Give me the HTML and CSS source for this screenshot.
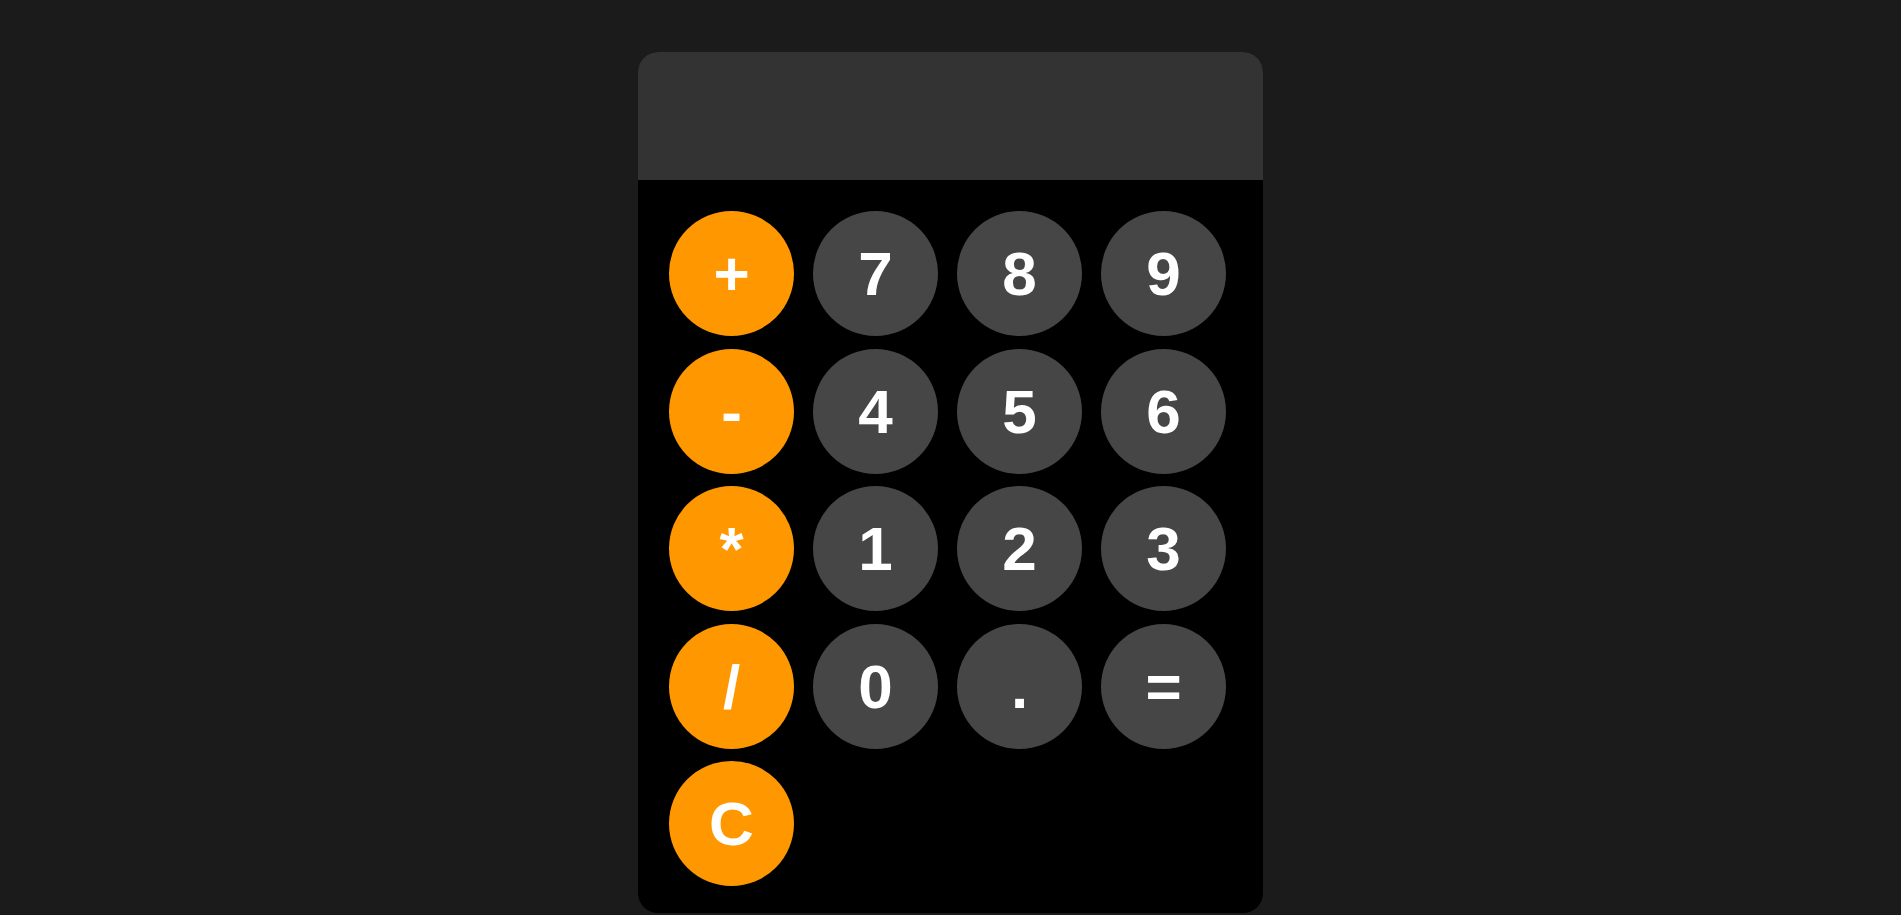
FILE: index.html
```html
<!DOCTYPE html>
<html lang="en">
<head>
    <meta charset="UTF-8">
    <meta name="viewport" content="width=device-width, initial-scale=1.0">
    <title>Calculator</title>
    <link rel="stylesheet" href="styles.css">
</head>
<body>
    <div class="calculator">
        <div class="display" id="display"></div>
        <div class="keys">
            <button class="key operator" onclick="press('+')">+</button>
            <button class="key" onclick="press('7')">7</button>
            <button class="key" onclick="press('8')">8</button>
            <button class="key" onclick="press('9')">9</button>

            <button class="key operator" onclick="press('-')">-</button>
            <button class="key" onclick="press('4')">4</button>
            <button class="key" onclick="press('5')">5</button>
            <button class="key" onclick="press('6')">6</button>

            <button class="key operator" onclick="press('*')">*</button>
            <button class="key" onclick="press('1')">1</button>
            <button class="key" onclick="press('2')">2</button>
            <button class="key" onclick="press('3')">3</button>

            <button class="key operator" onclick="press('/')">/</button>
            <button class="key" onclick="press('0')">0</button>
            <button class="key" onclick="press('.')">.</button>
            <button class="key" onclick="calculate()">=</button>

            <button class="key operator" onclick="clearDisplay()">C</button>
        </div>
    </div>

    <script>
        const display = document.getElementById('display');

        function press(value) {
            display.textContent += value;
        }

        function clearDisplay() {
            display.textContent = '';
        }

        function calculate() {
            try {
                display.textContent = eval(display.textContent);
            } catch (e) {
                display.textContent = 'Error';
            }
        }
    </script>
</body>
</html>
```

FILE: styles.css
```css
body {
    margin: 0;
    padding-top: 52px;
    background-color: #1b1b1b;
    font-family: "Liberation Sans", Arial, sans-serif;
}
.calculator {
    width: 625px;
    margin: 0 auto;
    background-color: #000;
    border-radius: 20px;
    overflow: hidden;
}
.display {
    height: 128px;
    background-color: #333;
    color: white;
    font-size: 48px;
    text-align: right;
    box-sizing: border-box;
    padding: 40px 30px 0;
}
.keys {
    display: grid;
    grid-template-columns: repeat(4, 125px);
    column-gap: 19px;
    row-gap: 12.5px;
    padding: 31px 37px 27px 31px;
}
.key {
    width: 125px;
    height: 125px;
    border: none;
    border-radius: 50%;
    background-color: #464646;
    color: white;
    font-family: "Liberation Sans", Arial, sans-serif;
    font-size: 62px;
    font-weight: bold;
    padding: 0;
    cursor: pointer;
}
.key:hover {
    background-color: #555;
}
.operator {
    background-color: #ff9800;
}
.operator:hover {
    background-color: #ffad33;
}
```
